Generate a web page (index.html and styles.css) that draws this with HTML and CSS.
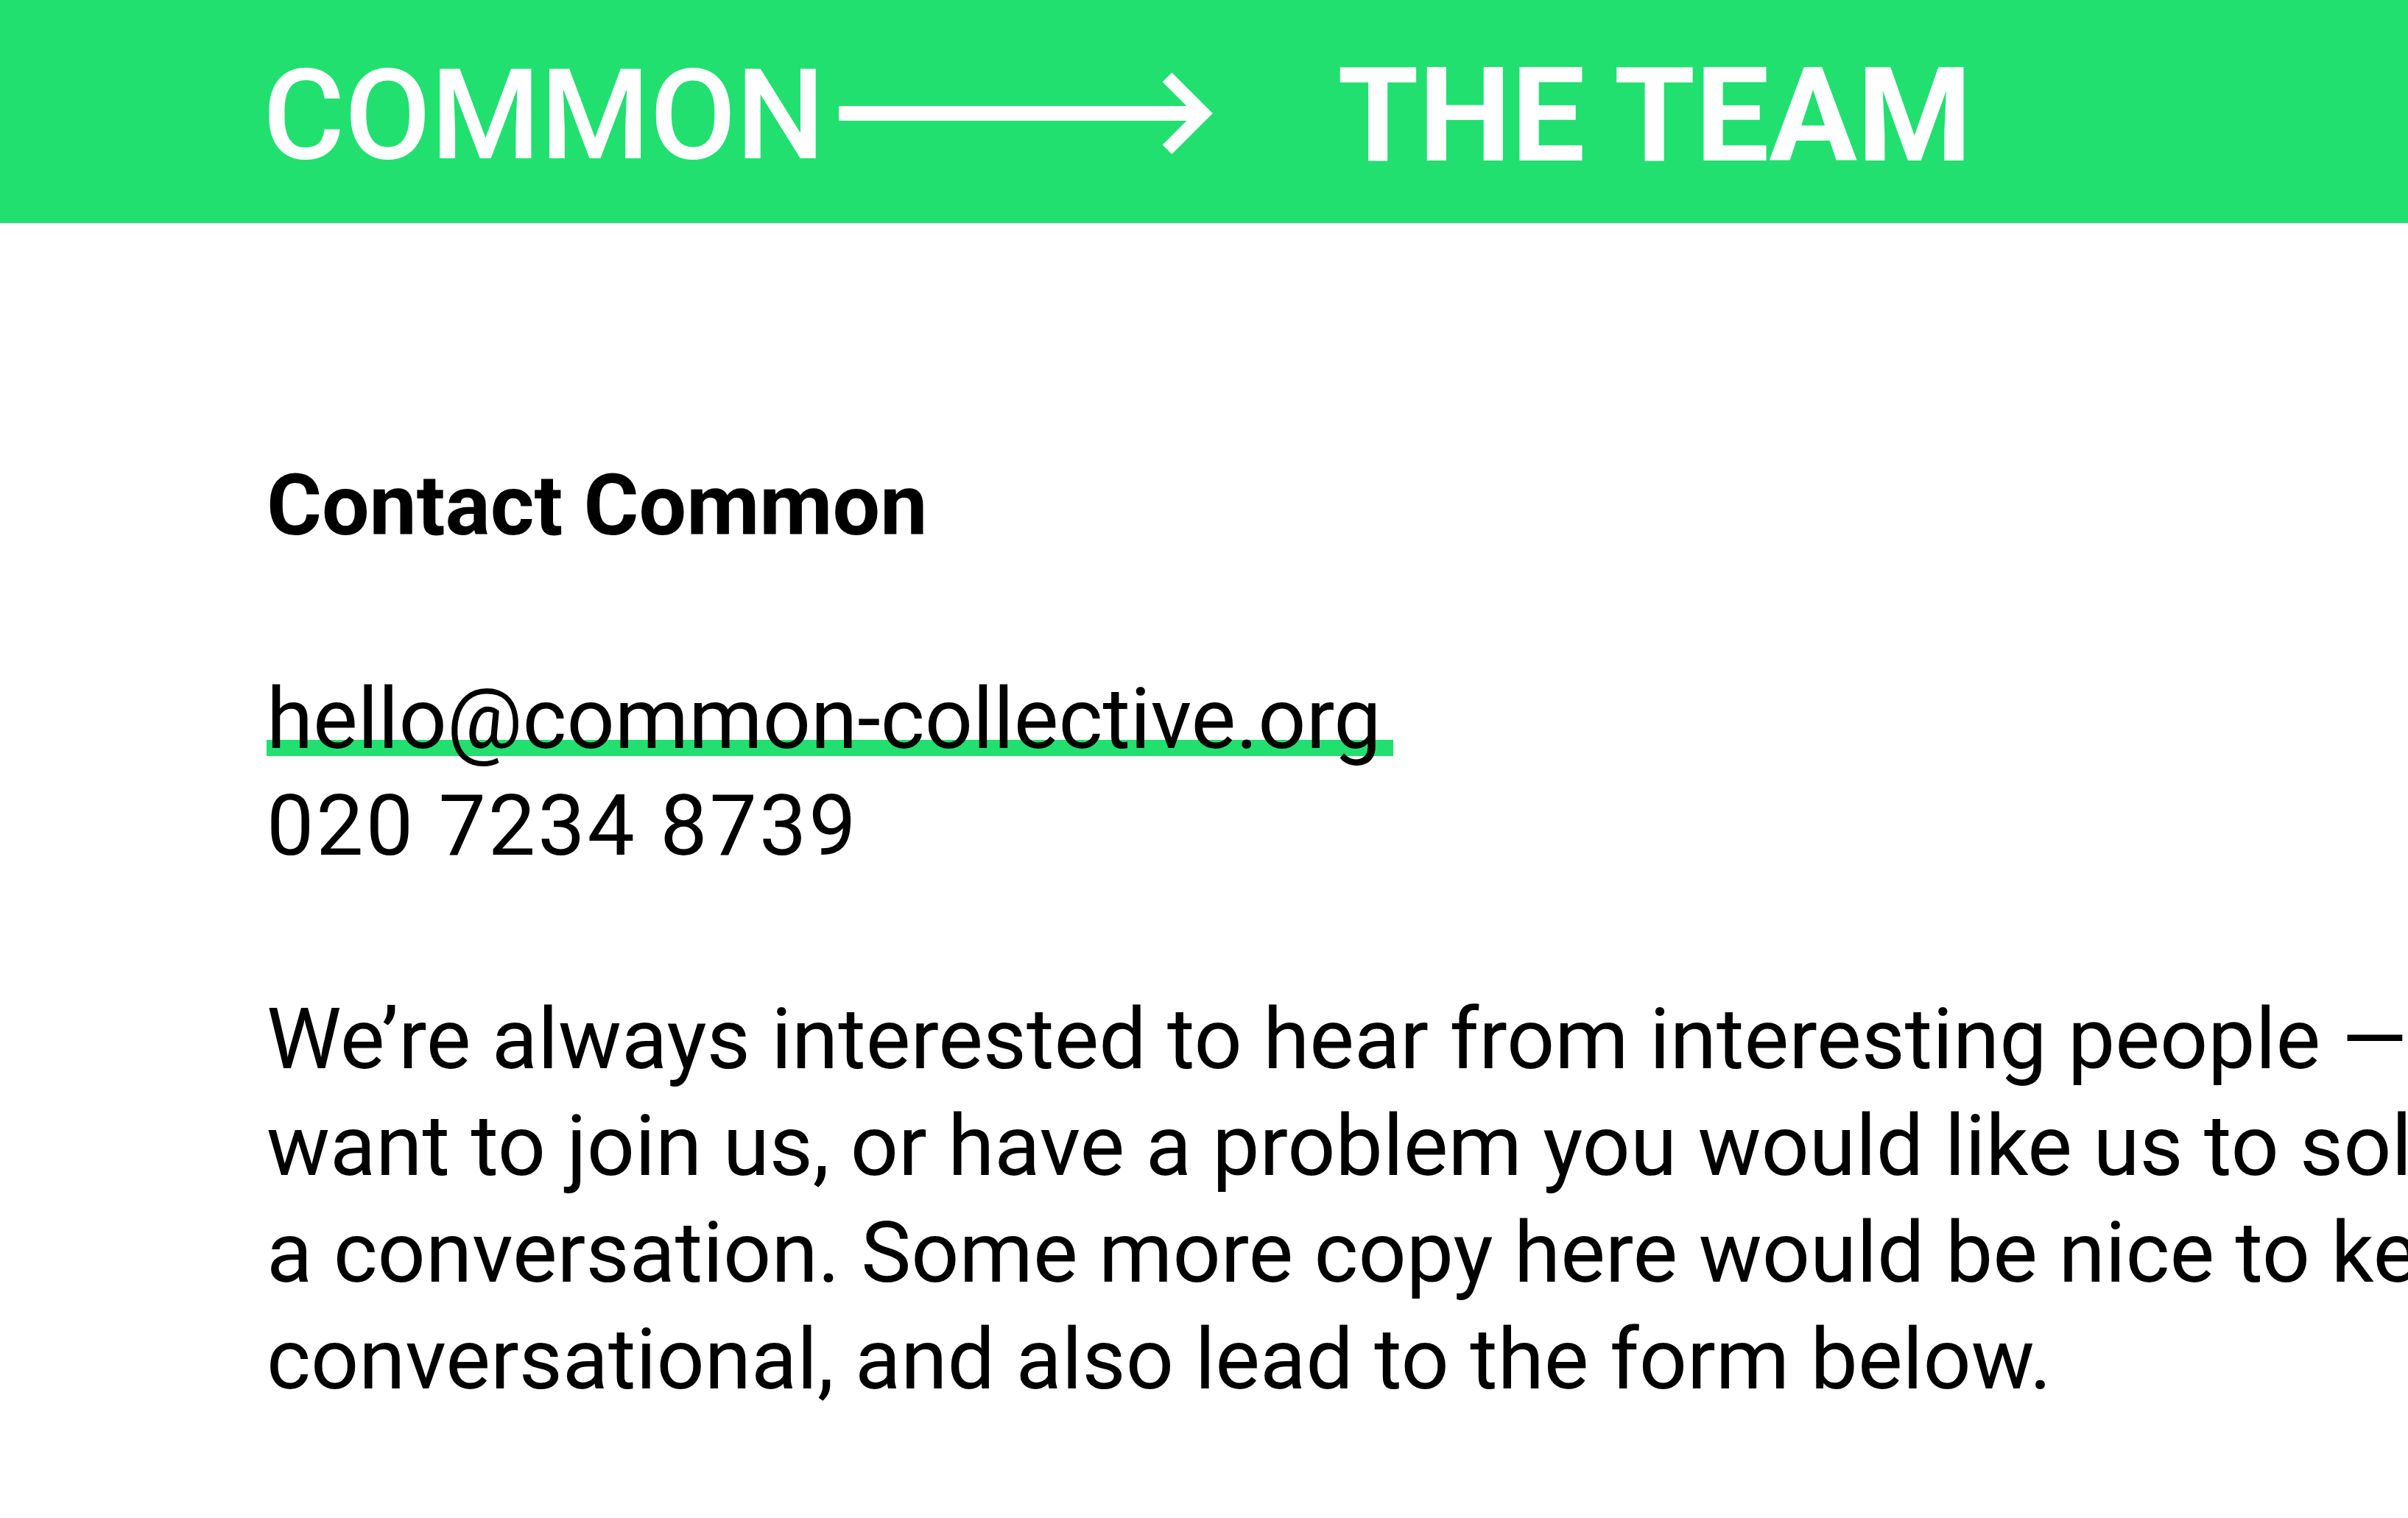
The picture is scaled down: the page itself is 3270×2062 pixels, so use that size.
FILE: index.html
```html
<!DOCTYPE html>
<html lang="en">
<head>
<meta charset="utf-8">
<title>Common — The Team</title>
<link rel="stylesheet" href="styles.css">
</head>
<body>
<header class="topbar">
  <span class="brand">COMMON</span>
  <svg class="arrow" width="512" height="110" viewBox="0 0 512 110" aria-hidden="true">
    <rect x="0" y="45" width="492" height="20" rx="2" fill="#fff"/>
    <polyline points="446,6 495,55 446,104" fill="none" stroke="#fff" stroke-width="18" stroke-linejoin="miter" stroke-linecap="butt"/>
  </svg>
  <span class="section">THE TEAM</span>
</header>
<main class="content">
  <h1 class="title">Contact Common</h1>
  <p class="contact">
    <a class="mail" href="mailto:hello@common-collective.org">hello@common-collective.org</a><br>
    <span class="tel">020 7234 8739</span>
  </p>
  <p class="intro">We’re always interested to hear from interesting people — if you want to join us, or have a problem you would like us to solve, start a&nbsp;conversation. Some more copy here would be nice to keep it conversational, and also lead to the form below.</p>
</main>
</body>
</html>
```
FILE: styles.css
```css
html, body {
  margin: 0;
  padding: 0;
  overflow: hidden;
  background: #ffffff;
}

body {
  font-family: Roboto, "Noto Sans", sans-serif;
  color: #000000;
}

.topbar {
  height: 303px;
  box-sizing: border-box;
  padding: 10px 0 0 357px;
  background: #21e070;
  color: #ffffff;
  display: flex;
  align-items: center;
  white-space: nowrap;
}

.brand {
  font-size: 170px;
  line-height: 174px;
  font-weight: 500;
}

.arrow {
  flex: none;
  margin: -5px 0 0 19px;
}

.section {
  margin-left: 165px;
  font-size: 178px;
  line-height: 174px;
  font-weight: 700;
}

.content {
  width: 3420px;
  padding: 312px 0 0 362px;
  font-size: 114.5px;
  line-height: 145px;
}

.title {
  margin: 0 0 145px;
  font-size: inherit;
  line-height: inherit;
  font-weight: 700;
}

.contact {
  margin: 0 0 145px;
}

.mail {
  color: inherit;
  text-decoration: none;
  padding-right: 16px;
  background-image: linear-gradient(#21e070, #21e070);
  background-repeat: no-repeat;
  background-size: 100% 22px;
  background-position: 0 calc(100% - 17px);
}

.tel {
  letter-spacing: 3px;
}

.intro {
  margin: 0;
}
```
